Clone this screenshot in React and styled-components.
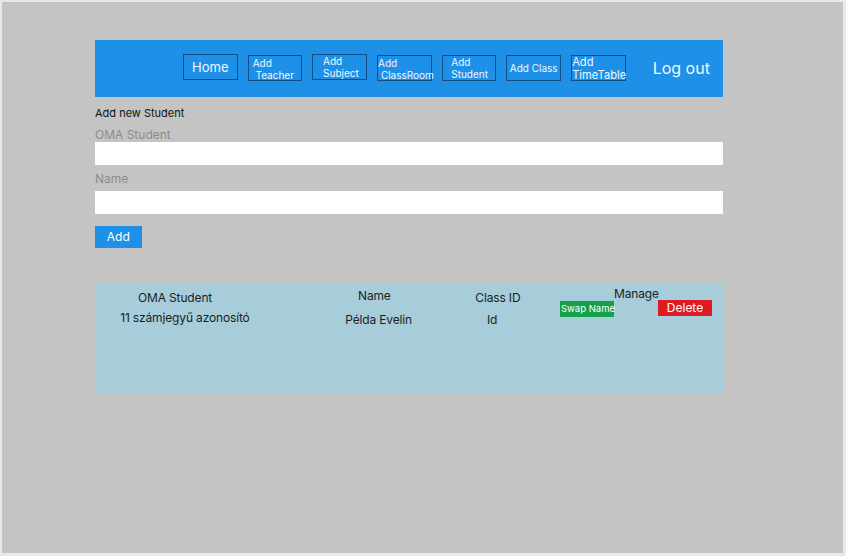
import React from "react";
import styled, { createGlobalStyle } from "styled-components";

const GlobalStyle = createGlobalStyle`
  html, body { margin: 0; padding: 0; }
  body {
    background: #e9e9e9;
    font-family: Inter, "Noto Sans", sans-serif;
  }
  * { box-sizing: border-box; }
`;

const BLUE = "#1e90e8";

const Frame = styled.div`
  width: 841px;
  height: 551px;
  margin: 2px 3px 3px 2px;
  background: #c4c4c4;
  padding: 38px 0 0 93px;
`;

const Content = styled.div`
  width: 628px;
  display: flex;
  flex-direction: column;
  align-items: stretch;
`;

const Header = styled.header`
  height: 57px;
  background: ${BLUE};
  display: flex;
  align-items: flex-start;
  padding-left: 88px;
`;

const Nav = styled.nav`
  display: flex;
  align-items: flex-start;
  gap: 10.2px;
  margin-top: 14px;
`;

const NavButton = styled.div`
  width: 54.5px;
  height: 26px;
  margin-top: ${(p) => p.$dy || 0}px;
  border: 1px solid #114f88;
  color: #f2f7fc;
  font-size: ${(p) => p.$size || 10}px;
  line-height: ${(p) => p.$lh || 12}px;
  padding: ${(p) => p.$pt || 0}px 0 0 ${(p) => p.$pl || 0}px;
  white-space: pre;
  display: flex;
  flex-direction: column;
  justify-content: ${(p) => (p.$center ? "center" : "flex-start")};
  align-items: ${(p) => (p.$center ? "center" : "flex-start")};
  overflow: visible;
`;

const LogOut = styled.div`
  margin: 17.5px 0 0 27px;
  font-size: 16px;
  color: #f2f7fc;
  white-space: nowrap;
`;

const FormTitle = styled.div`
  margin-top: 9px;
  font-size: 11px;
  color: #111;
`;

const Label = styled.label`
  display: block;
  margin-top: ${(p) => p.$mt}px;
  font-size: 12px;
  color: #8d8d8d;
`;

const Input = styled.input`
  display: block;
  width: 100%;
  height: 23px;
  margin-top: ${(p) => p.$mt || 0}px;
  border: none;
  outline: none;
  background: #fff;
  padding: 0 6px;
  font-family: inherit;
`;

const AddButton = styled.button`
  align-self: flex-start;
  width: 46.7px;
  height: 22px;
  margin-top: 12px;
  border: none;
  padding: 0;
  background: ${BLUE};
  color: #fff;
  font-family: inherit;
  font-size: 12px;
`;

const Panel = styled.section`
  margin-top: 36px;
  height: 110px;
  background: #a6cdd9;
  display: flex;
  align-items: flex-start;
`;

const Column = styled.div`
  width: ${(p) => p.$w}px;
  flex: none;
  display: flex;
  flex-direction: column;
  align-items: flex-start;
  padding-top: ${(p) => p.$pt}px;
  gap: ${(p) => p.$gap || 0}px;
`;

const Cell = styled.div`
  margin-left: ${(p) => p.$dx}px;
  font-size: 12px;
  line-height: 15px;
  letter-spacing: -0.15px;
  color: #1b1f24;
  white-space: nowrap;
`;

const ManageRow = styled.div`
  display: flex;
  align-items: flex-start;
  gap: 44px;
  margin-left: 10px;
  margin-top: -0.4px;
`;

const SmallButton = styled.button`
  width: 54px;
  height: 16px;
  margin-top: ${(p) => p.$dy || 0}px;
  border: none;
  padding: 0 0 0 ${(p) => (p.$danger ? 0 : 1)}px;
  background: ${(p) => (p.$danger ? "#de1b22" : "#12a24c")};
  color: #fff;
  font-family: inherit;
  font-size: ${(p) => (p.$danger ? 12 : 9.5)}px;
  line-height: 16px;
  text-align: ${(p) => (p.$danger ? "center" : "left")};
  white-space: nowrap;
`;

export default function App() {
  return (
    <>
      <GlobalStyle />
      <Frame>
        <Content>
          <Header>
            <Nav>
              <NavButton $size={13} $lh={16} $center>Home</NavButton>
              <NavButton $dy={1} $pt={0.5} $pl={4}>{"Add\n Teacher"}</NavButton>
              <NavButton $pt={0.2} $pl={9.7}>{"Add\nSubject"}</NavButton>
              <NavButton $dy={1} $pt={0.5} $pl={0}>{"Add\n ClassRoom"}</NavButton>
              <NavButton $dy={1} $pt={0.2} $pl={8.5}>{"Add\nStudent"}</NavButton>
              <NavButton $dy={1} $center>Add Class</NavButton>
              <NavButton $dy={1} $size={11.2} $lh={12.8} $pt={0} $pl={0}>{"Add\nTimeTable"}</NavButton>
            </Nav>
            <LogOut>Log out</LogOut>
          </Header>

          <FormTitle>Add new Student</FormTitle>
          <Label $mt={6.6}>OMA Student</Label>
          <Input />
          <Label $mt={6.5}>Name</Label>
          <Input $mt={4.9} />
          <AddButton>Add</AddButton>

          <Panel>
            <Column $w={205} $pt={6.2} $gap={4.4}>
              <Cell $dx={43}>OMA Student</Cell>
              <Cell $dx={25.2}>11 számjegyű azonosító</Cell>
            </Column>
            <Column $w={140} $pt={3.6} $gap={9.3}>
              <Cell $dx={58}>Name</Cell>
              <Cell $dx={45.2}>Példa Evelin</Cell>
            </Column>
            <Column $w={110} $pt={5.6} $gap={7.3}>
              <Cell $dx={35.3}>Class ID</Cell>
              <Cell $dx={47}>Id</Cell>
            </Column>
            <Column $w={173} $pt={2.4}>
              <Cell $dx={64}>Manage</Cell>
              <ManageRow>
                <SmallButton>Swap Name</SmallButton>
                <SmallButton $danger $dy={-1}>Delete</SmallButton>
              </ManageRow>
            </Column>
          </Panel>
        </Content>
      </Frame>
    </>
  );
}
